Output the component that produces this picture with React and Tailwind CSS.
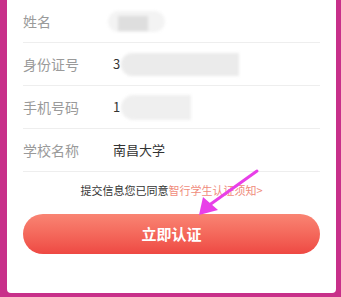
import React from "react";

const font = { fontFamily: '"Noto Sans CJK SC", "Noto Sans", sans-serif' };

const Row = ({ label, children }) => (
  <div className="flex items-center h-[43px] border-b border-[#eeeeee]">
    <span className="w-[90px] text-[14px] text-[#9a9a9a]">{label}</span>
    <div className="flex items-center text-[13px] text-[#333333]">{children}</div>
  </div>
);

export default function App() {
  return (
    <div
      className="w-[341px] h-[297px] bg-[#c8308a] pl-[7px] pr-[5px] pb-[4px] overflow-hidden"
      style={font}
    >
      <div className="relative h-full bg-white rounded-b-[4px] px-4">
        <Row label="姓名">
          <div className="relative ml-[-5px] w-[57px] h-[21px] rounded-full bg-[#f3f3f3] blur-[1.5px]">
            <div className="absolute left-[10px] top-[5px] w-[30px] h-[15px] bg-[#dedede]"></div>
          </div>
        </Row>
        <Row label="身份证号">
          <span>3</span>
          <div className="ml-[1px] w-[118px] h-[23px] rounded-l-full bg-[#ebebeb] blur-[1.5px]"></div>
        </Row>
        <Row label="手机号码">
          <span>1</span>
          <div className="ml-[1px] w-[70px] h-[25px] rounded-l-full bg-[#efefef] blur-[1.5px]"></div>
        </Row>
        <Row label="学校名称">
          <span>南昌大学</span>
        </Row>
        <p className="mt-[10px] text-center text-[11px] leading-4 text-[#333333]">
          提交信息您已同意<span className="text-[#f08c7c]">智行学生认证须知&gt;</span>
        </p>
        <button className="mt-[16px] w-full h-[40px] rounded-full bg-gradient-to-b from-[#f98473] to-[#ee4843] text-white text-[15px] font-bold">
          立即认证
        </button>
        <svg
          className="absolute left-0 top-0 pointer-events-none"
          width="329"
          height="293"
          viewBox="7 0 329 293"
        >
          <line x1="257" y1="171" x2="208" y2="206" stroke="#e83fe8" strokeWidth="3" strokeLinecap="round" />
          <polygon points="199,215 203,197 218,210" fill="#e83fe8" />
        </svg>
      </div>
    </div>
  );
}
